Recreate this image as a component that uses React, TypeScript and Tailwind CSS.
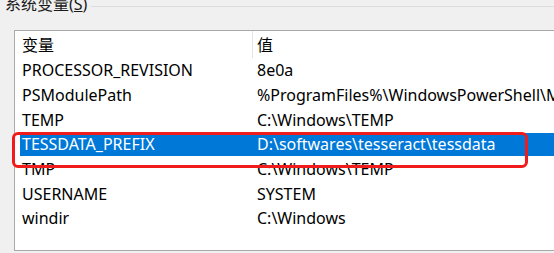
const rows: [string, string][] = [
  ["PROCESSOR_REVISION", "8e0a"],
  ["PSModulePath", "%ProgramFiles%\\WindowsPowerShell\\Modules"],
  ["TEMP", "C:\\Windows\\TEMP"],
  ["TESSDATA_PREFIX", "D:\\softwares\\tesseract\\tessdata"],
  ["TMP", "C:\\Windows\\TEMP"],
  ["USERNAME", "SYSTEM"],
  ["windir", "C:\\Windows"],
];

export default function App() {
  return (
    <div
      className="relative w-[554px] h-[253px] overflow-hidden bg-[#f0f0f0] text-[#000]"
      style={{ fontFamily: "'Noto Sans', 'Noto Sans CJK SC', sans-serif" }}
    >
      {/* group title */}
      <div className="flex items-center h-[16px] mt-[-4px] pl-[5px]">
        <span className="text-[16px] leading-[16px] text-[#1a1a1a] whitespace-nowrap">
          系统变量(<span className="underline">S</span>)
        </span>
        <div className="flex-1 ml-[4px] h-px bg-[#dcdcdc] mt-[4px]" />
      </div>

      {/* list box */}
      <div className="ml-[14px] mt-[18px] h-[221px] bg-white border-l border-t border-b border-[#a9a9a9] overflow-hidden">
        <div className="flex h-[27px] items-center text-[16px]">
          <div className="w-[237px] pl-[7px]">变量</div>
          <div className="w-px h-full bg-[#e5e5e5]" />
          <div className="pl-[4px]">值</div>
        </div>
        {rows.map(([name, value], i) => {
          const sel = name === "TESSDATA_PREFIX";
          return (
            <div key={i} className="h-[24.67px] pl-[5px] py-px">
              <div
                className={
                  "flex h-full items-center text-[16px] whitespace-nowrap " +
                  (sel ? "bg-[#0078d7] text-white" : "")
                }
              >
                <div className="w-[232px] pl-[2px] shrink-0">{name}</div>
                <div className="pl-[5px]">{value}</div>
              </div>
            </div>
          );
        })}
      </div>

      {/* red annotation box */}
      <div className="absolute left-[12px] top-[132px] w-[516px] h-[36px] border-[3.5px] border-[#f01c1c] rounded-[6px]" />
    </div>
  );
}
